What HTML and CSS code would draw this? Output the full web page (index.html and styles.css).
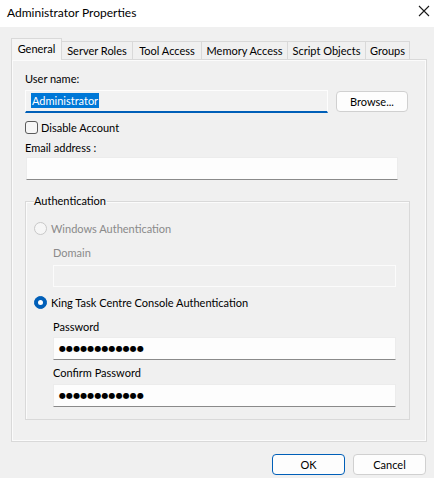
FILE: index.html
```html
<!DOCTYPE html>
<html>
<head>
<meta charset="utf-8">
<link rel="stylesheet" href="styles.css">
</head>
<body>
<div class="dialog">
  <div class="titlebar">
    <span class="title">Administrator Properties</span>
    <svg class="close" width="12" height="12" viewBox="0 0 12 12"><path d="M1 1L11 11M11 1L1 11" stroke="#1a1a1a" stroke-width="1.1" fill="none"/></svg>
  </div>
  <div class="tabs">
    <div class="tab active">General</div>
    <div class="tab w-roles">Server Roles</div>
    <div class="tab w-tool">Tool Access</div>
    <div class="tab w-mem">Memory Access</div>
    <div class="tab w-script">Script Objects</div>
    <div class="tab w-groups">Groups</div>
  </div>
  <div class="panel">
    <div class="label">User name:</div>
    <div class="user-row">
      <div class="input focused"><span class="sel">Administrator</span></div>
      <div class="btn">Browse...</div>
    </div>
    <div class="check-row"><span class="checkbox"></span><span>Disable Account</span></div>
    <div class="label email-label">Email address :</div>
    <div class="input white email"></div>
    <fieldset class="auth">
      <legend>Authentication</legend>
      <div class="radio-row first disabled"><span class="radio"></span><span>Windows Authentication</span></div>
      <div class="sub">
        <div class="label domain-label disabled-text">Domain</div>
        <div class="input disabled-input"></div>
      </div>
      <div class="radio-row"><span class="radio checked"></span><span>King Task Centre Console Authentication</span></div>
      <div class="sub">
        <div class="label pw-label">Password</div>
        <div class="input white pw pw1"><span class="dots">●●●●●●●●●●●●</span></div>
        <div class="label confirm-label">Confirm Password</div>
        <div class="input white pw pw2"><span class="dots">●●●●●●●●●●●●</span></div>
      </div>
    </fieldset>
  </div>
  <div class="footer">
    <div class="btn primary">OK</div>
    <div class="btn">Cancel</div>
  </div>
</div>
</body>
</html>
```

FILE: styles.css
```css
* { box-sizing: border-box; }
html, body { margin: 0; padding: 0; }
body {
  background: #f0f0f0;
  font-family: "Lato", "Noto Sans", sans-serif;
  font-size: 11px;
  color: #000;
  width: 434px;
  height: 478px;
  overflow: hidden;
}
.dialog { width: 434px; height: 478px; background: #f0f0f0; }
.titlebar {
  height: 27px;
  background: #ffffff;
  display: flex;
  align-items: center;
  justify-content: space-between;
  padding: 0 4px 2px 7px;
}
.title { font-size: 12px; line-height: 16px; }
.close { margin-bottom: 3px; }
.tabs {
  display: flex;
  align-items: flex-end;
  margin-top: 11px;
  padding-left: 11px;
  height: 21px;
  position: relative;
  z-index: 1;
}
.tab {
  height: 18px;
  border: 1px solid #d9d9d9;
  border-bottom: none;
  border-left: none;
  background: #f0f0f0;
  line-height: 17px;
  white-space: nowrap;
  text-align: center;
}
.w-roles { width: 71px; }
.w-tool { width: 69px; }
.w-mem { width: 86px; }
.w-script { width: 78px; }
.w-groups { width: 44px; }
.tab.active {
  height: 22px;
  margin-bottom: -1px;
  border-left: 1px solid #d9d9d9;
  background: #f5f5f5;
  line-height: 19px;
  width: 51px;
}
.panel {
  margin-left: 11px;
  width: 416px;
  height: 383px;
  border: 1px solid #d9d9d9;
  box-shadow: inset 1px 1px 0 #fbfbfb, inset -1px -1px 0 #fbfbfb;
  background: #f0f0f0;
  padding: 11px 0 0 13px;
}
.label { line-height: 16px; }
.user-row {
  display: flex;
  align-items: center;
  gap: 8px;
  margin-top: 3px;
}
.input {
  height: 23px;
  border: 1px solid #e4e4e4;
  background: #f3f3f3;
  padding: 2px 5px;
}
.input.focused {
  width: 303px;
  border-bottom: 2px solid #005fb8;
  background: #f2f2f2;
  border-color: #fdfdfd #fdfdfd #005fb8 #fdfdfd;
  padding: 2px 5px;
  line-height: 16px;
}
.sel {
  background: #0078d7;
  color: #fff;
  display: inline-block;
  line-height: 15px;
  padding: 0 1px;
}
.btn {
  width: 72px;
  height: 21px;
  border: 1px solid #d0d0d0;
  border-radius: 4px;
  background: #fdfdfd;
  text-align: center;
  line-height: 19px;
}
.check-row {
  display: flex;
  align-items: center;
  gap: 3px;
  margin-top: 8px;
  height: 13px;
}
.checkbox {
  width: 13px;
  height: 13px;
  border: 1px solid #5a5a5a;
  border-radius: 3px;
  background: #f6f6f6;
}
.email-label { margin-top: 6px; }
.input.white {
  background: #fdfdfd;
  border-color: #ececec #ececec #8a8a8a #ececec;
}
.email { width: 372px; margin-top: 1px; margin-left: 1px; }
.auth {
  width: 385px;
  height: 227px;
  margin: 13px 0 0 0;
  padding: 0 0 0 8px;
  border: 1px solid #d9d9d9;
  box-shadow: 1px 1px 0 #fbfbfb inset;
}
.auth legend {
  padding: 0 1px 0 0;
  margin-left: 0;
  line-height: 16px;
}
.radio-row {
  display: flex;
  align-items: center;
  gap: 4px;
  height: 16px;
}
.radio-row.first { margin-top: 11px; }
.radio {
  width: 13px;
  height: 13px;
  border-radius: 50%;
  border: 1px solid #c8c8c8;
  background: #f6f6f6;
  position: relative;
}
.radio.checked {
  background: #005fb8;
  border-color: #005fb8;
}
.radio.checked::after {
  content: "";
  position: absolute;
  left: 3px;
  top: 3px;
  width: 5px;
  height: 5px;
  border-radius: 50%;
  background: #fff;
}
.disabled { color: #8a8a8a; }
.disabled-text { color: #8a8a8a; }
.sub { padding-left: 19px; }
.domain-label { margin-top: 9px; }
.disabled-input {
  width: 343px;
  height: 22px;
  margin-top: 4px;
  margin-bottom: 7px;
  background: #f0f0f0;
  border: 1px solid #fbfbfb;
}
.pw-label { margin-top: 9px; }
.confirm-label { margin-top: 5px; }
.pw { width: 343px; padding: 1px 5px; }
.pw1 { margin-top: 2px; }
.pw2 { margin-top: 3px; }
.dots {
  font-family: "DejaVu Sans", sans-serif;
  font-size: 8px;
  letter-spacing: 0.1px;
  line-height: 19px;
}
.footer {
  display: flex;
  justify-content: flex-end;
  gap: 8px;
  padding-right: 8px;
  margin-top: 12px;
}
.footer .btn { width: 73px; height: 21px; }
.btn.primary { border-color: #005fb8; }
```
